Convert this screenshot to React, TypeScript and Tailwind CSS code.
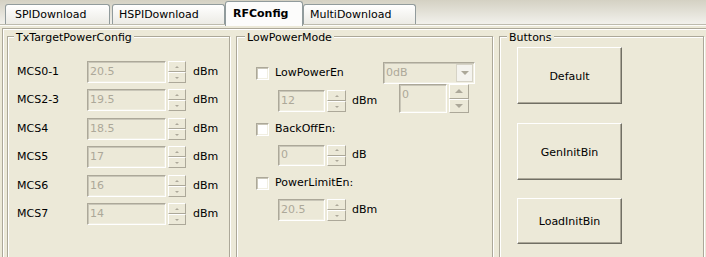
import React from "react";

const sunken =
  "border border-t-[#aca899] border-l-[#aca899] border-b-white border-r-white shadow-[inset_1px_1px_0_#c9c6b8,inset_-1px_-1px_0_#f1efe2]";

function Arrow({ up, big }: { up?: boolean; big?: boolean }) {
  if (big) {
    return up ? (
      <div className="w-0 h-0 border-x-[4px] border-x-transparent border-b-[4px] border-b-[#aca899]" />
    ) : (
      <div className="w-0 h-0 border-x-[4px] border-x-transparent border-t-[4px] border-t-[#aca899]" />
    );
  }
  return up ? (
    <div className="w-0 h-0 border-x-[2px] border-x-transparent border-b-[2px] border-b-[#aca899]" />
  ) : (
    <div className="w-0 h-0 border-x-[2px] border-x-transparent border-t-[2px] border-t-[#aca899]" />
  );
}

function Spinner({ w, big }: { w: string; big?: boolean }) {
  const part =
    "flex-1 flex items-center justify-center border border-t-white border-l-white border-b-[#aca899] border-r-[#aca899] bg-[#ece9d8]";
  return (
    <div className={`${w} self-stretch flex flex-col`}>
      <div className={part}>
        <Arrow up big={big} />
      </div>
      <div className={part}>
        <Arrow big={big} />
      </div>
    </div>
  );
}

function SpinEdit({
  value,
  w,
  h,
  sw,
  top,
}: {
  value: string;
  w: string;
  h: string;
  sw: string;
  top?: boolean;
}) {
  return (
    <div className={`flex ${h}`}>
      <div
        className={`${w} ${sunken} flex ${top ? "items-start pt-[2px]" : "items-center"} pl-[2px] text-[#aca899]`}
      >
        {value}
      </div>
      <div className="w-[2px]" />
      <Spinner w={sw} big={top} />
    </div>
  );
}

function Check({ label }: { label: string }) {
  return (
    <div className="flex items-center h-[13px] pl-[19px]">
      <div className={`w-[13px] h-[13px] bg-white ${sunken}`} />
      <span className="ml-[6px]">{label}</span>
    </div>
  );
}

function Group({
  title,
  w,
  lx,
  children,
}: {
  title: string;
  w: string;
  lx: string;
  children: React.ReactNode;
}) {
  return (
    <div
      className={`relative ${w} h-[230px] shrink-0 border border-[#aca899] shadow-[inset_1px_1px_0_#fff,1px_1px_0_#fff]`}
    >
      <span className={`absolute ${lx} -top-[6px] px-[2px] leading-[13px] bg-[#ece9d8]`}>
        {title}
      </span>
      {children}
    </div>
  );
}

function BigButton({ label, h, mt }: { label: string; h: string; mt: string }) {
  return (
    <div
      className={`${mt} ml-[17px] w-[105px] ${h} flex items-center justify-center pt-[3px] border border-t-white border-l-white border-b-[#716f64] border-r-[#716f64] shadow-[inset_-1px_-1px_0_#aca899] bg-[#ece9d8]`}
    >
      {label}
    </div>
  );
}

const mcs = [
  ["MCS0-1", "20.5", "mt-0"],
  ["MCS2-3", "19.5", "mt-[6px]"],
  ["MCS4", "18.5", "mt-[7px]"],
  ["MCS5", "17", "mt-[6px]"],
  ["MCS6", "16", "mt-[7px]"],
  ["MCS7", "14", "mt-[6px]"],
];

export default function App() {
  const tab =
    "h-[20px] flex items-center pt-[1px] border border-b-0 border-[#919b9c] rounded-t-[3px] bg-linear-to-b from-white to-[#ecebe5]";
  return (
    <div className="w-[706px] h-[257px] overflow-hidden bg-[#ece9d8] text-[11px] text-black font-['DejaVu_Sans',sans-serif]">
      {/* tabs */}
      <div className="h-[24px] flex items-end bg-linear-to-b from-[#d4d1c3] to-[#f2f1ec]">
        <div className={`${tab} ml-[5px] w-[105px] pl-[9px]`}>SPIDownload</div>
        <div className={`${tab} ml-[2px] w-[113px] pl-[6px]`}>HSPIDownload</div>
        <div className="relative z-10 -mb-[2px] h-[25px] w-[78px] flex items-center pl-[7px] border border-b-0 border-[#919b9c] rounded-t-[3px] bg-[#fcfcfb] font-bold">
          RFConfig
        </div>
        <div className={`${tab} w-[113px] pl-[6px]`}>MultiDownload</div>
      </div>
      <div className="h-px bg-[#bdbbae]" />
      <div className="h-px bg-[#fcfcfa]" />

      <div className="pl-[2px] pt-[2px]">
        <div className="border-t border-l border-[#aca899] shadow-[inset_1px_1px_0_#fff] pt-[7px] pl-[4px] flex gap-[6px]">
          <Group title="TxTargetPowerConfig" w="w-[223px]" lx="left-[6px]">
            <div className="pt-[24px] pl-[9px] flex flex-col">
              {mcs.map(([l, v, m]) => (
                <div key={l} className={`flex items-center h-[22px] ${m}`}>
                  <span className="w-[70px]">{l}</span>
                  <SpinEdit value={v} w="w-[79px]" h="h-[22px]" sw="w-[18px]" />
                  <span className="ml-[7px]">dBm</span>
                </div>
              ))}
            </div>
          </Group>

          <Group title="LowPowerMode" w="w-[257px]" lx="left-[8px]">
            <div className="pt-[25px] flex flex-col">
              <div className="flex items-center h-[22px]">
                <div className="flex items-center pl-[19px]">
                  <div className={`w-[13px] h-[13px] bg-white ${sunken}`} />
                  <span className="ml-[6px] w-[108px]">LowPowerEn</span>
                </div>
                <div className={`w-[92px] h-[22px] ${sunken} flex items-center justify-between pl-[2px] pr-[1px] text-[#aca899]`}>
                  <span>0dB</span>
                  <div className="w-[17px] h-[18px] flex items-center justify-center border border-[#d6d3c6] bg-[#f4f3ee]">
                    <Arrow big />
                  </div>
                </div>
              </div>
              <div className="flex items-start">
                <div className="mt-[6px] ml-[41px] flex items-center">
                  <SpinEdit value="12" w="w-[47px]" h="h-[22px]" sw="w-[19px]" />
                  <span className="ml-[6px] w-[47px]">dBm</span>
                </div>
                <SpinEdit value="0" w="w-[48px]" h="h-[29px]" sw="w-[20px]" top />
              </div>
              <div className="mt-[10px]">
                <Check label="BackOffEn:" />
              </div>
              <div className="mt-[9px] ml-[41px] flex items-center">
                <SpinEdit value="0" w="w-[47px]" h="h-[21px]" sw="w-[19px]" />
                <span className="ml-[6px]">dB</span>
              </div>
              <div className="mt-[11px]">
                <Check label="PowerLimitEn:" />
              </div>
              <div className="mt-[9px] ml-[41px] flex items-center">
                <SpinEdit value="20.5" w="w-[47px]" h="h-[22px]" sw="w-[19px]" />
                <span className="ml-[6px]">dBm</span>
              </div>
            </div>
          </Group>

          <Group title="Buttons" w="w-[205px]" lx="left-[7px]">
            <div className="flex flex-col">
              <BigButton label="Default" h="h-[57px]" mt="mt-[10px]" />
              <BigButton label="GenInitBin" h="h-[57px]" mt="mt-[19px]" />
              <BigButton label="LoadInitBin" h="h-[46px]" mt="mt-[18px]" />
            </div>
          </Group>
        </div>
      </div>
    </div>
  );
}
